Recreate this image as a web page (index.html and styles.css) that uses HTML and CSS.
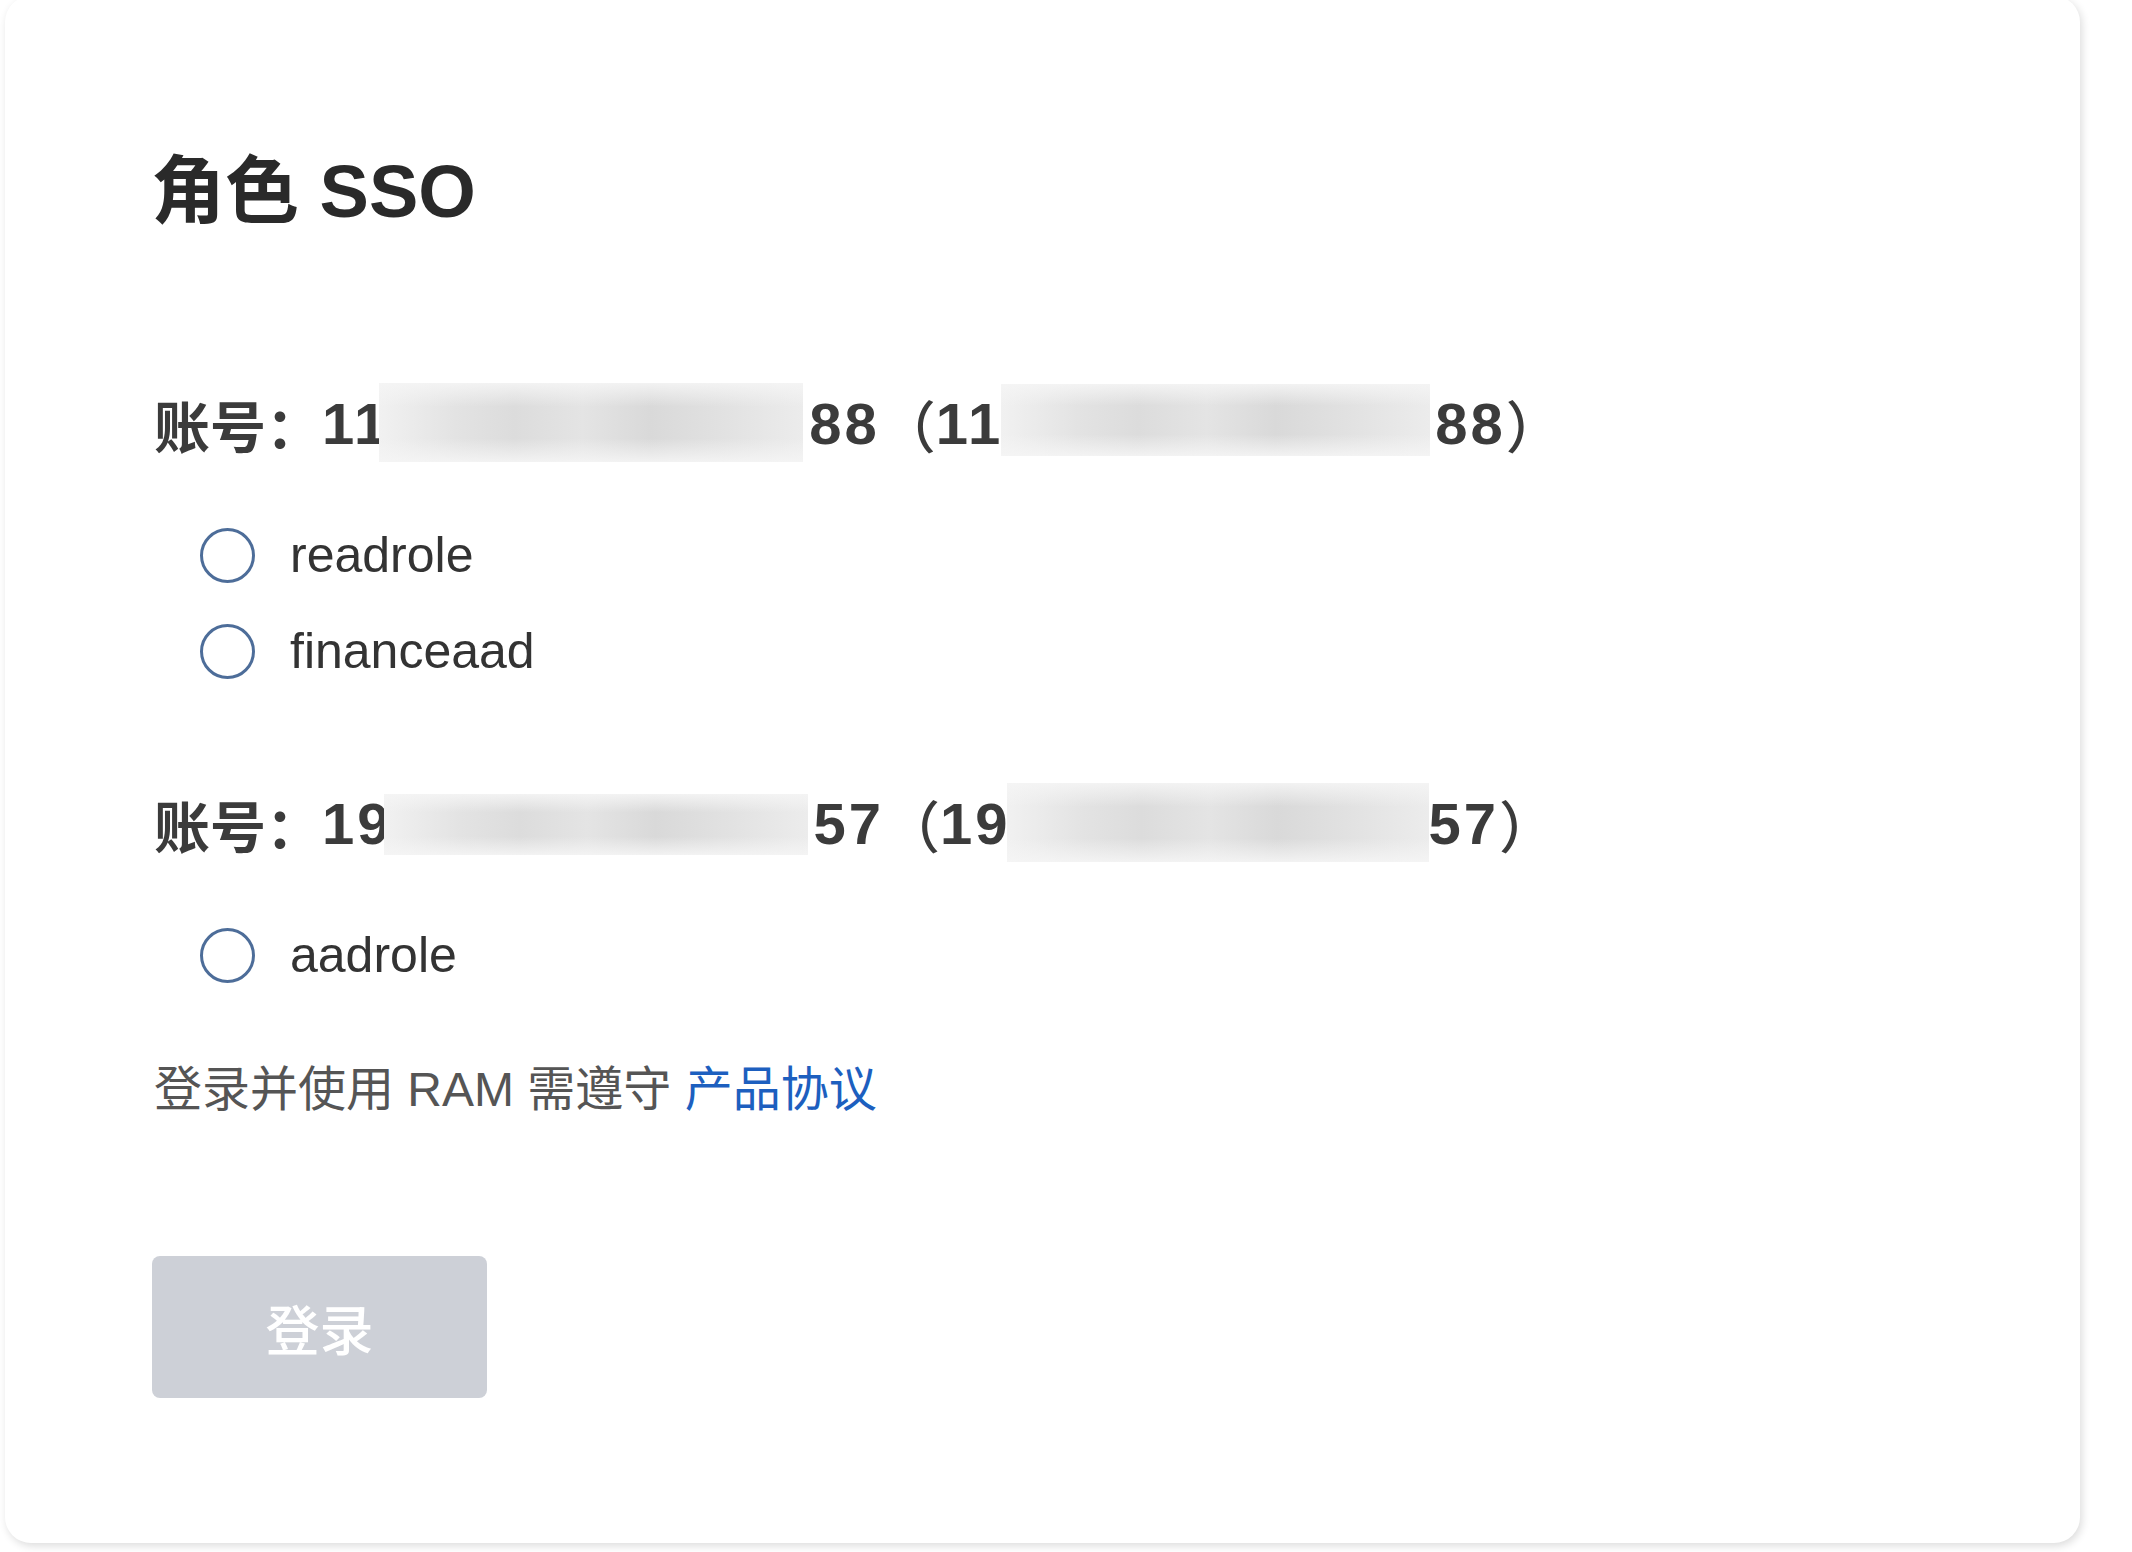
FILE: index.html
```html
<!DOCTYPE html>
<html lang="zh-CN">
<head>
<meta charset="utf-8">
<title>角色 SSO</title>
<link rel="stylesheet" href="styles.css">
</head>
<body>
<div class="card">
  <h1 class="title">角色 SSO</h1>

  <div class="account">
    <span class="acc-label">账号：</span><span class="num">11</span><span class="blur blur-1a"></span><span class="num tail">88</span><span class="paren">（</span><span class="num">11</span><span class="blur blur-1b"></span><span class="num tail-1">88</span><span class="paren close">）</span>
  </div>
  <div class="roles">
    <label class="role"><span class="radio"></span><span class="role-name">readrole</span></label>
    <label class="role"><span class="radio"></span><span class="role-name">financeaad</span></label>
  </div>

  <div class="account account-2">
    <span class="acc-label">账号：</span><span class="num">19</span><span class="blur blur-2a"></span><span class="num tail">57</span><span class="paren">（</span><span class="num">19</span><span class="blur blur-2b"></span><span class="num">57</span><span class="paren close">）</span>
  </div>
  <div class="roles">
    <label class="role"><span class="radio"></span><span class="role-name">aadrole</span></label>
  </div>

  <p class="terms">登录并使用 RAM 需遵守 <a class="terms-link" href="#">产品协议</a></p>

  <button class="login-btn" type="button" disabled>登录</button>
</div>
</body>
</html>
```

FILE: styles.css
```css
html, body {
  margin: 0;
  padding: 0;
  background: #ffffff;
}

body {
  font-family: "Liberation Sans", "Noto Sans CJK SC", sans-serif;
  color: #333333;
  overflow: hidden;
  height: 1552px;
}

.card {
  box-sizing: border-box;
  margin: -4px 0 0 5px;
  width: 2075px;
  height: 1547px;
  padding: 146px 0 0 149px;
  background: #ffffff;
  border-radius: 26px;
  box-shadow: 2px 3px 9px rgba(0, 0, 0, 0.14);
}

.title {
  margin: 0 0 0 -3px;
  height: 100px;
  display: flex;
  align-items: center;
  font-size: 74px;
  font-weight: 700;
  color: #2a2a2a;
  line-height: 1;
}

.account {
  margin-top: 132px;
  height: 100px;
  display: flex;
  align-items: center;
  font-size: 56px;
  font-weight: 700;
  color: #3b3b3b;
  line-height: 1;
  white-space: nowrap;
}

.account-2 {
  margin-top: 75px;
}

.acc-label {
  font-family: "Noto Sans CJK SC", sans-serif;
}

.paren {
  font-family: "Noto Sans CJK SC", sans-serif;
  font-weight: 500;
}

.num {
  font-size: 58px;
  letter-spacing: 3px;
}

.num.tail {
  margin-left: 6px;
}

.num.tail-1 {
  margin-left: 5px;
}

.blur {
  display: block;
  flex: none;
  background:
    linear-gradient(180deg, rgba(245,245,245,0.9) 0%, rgba(245,245,245,0) 30%, rgba(245,245,245,0) 70%, rgba(245,245,245,0.9) 100%),
    linear-gradient(90deg, #f1f1f1 0%, #e3e3e3 18%, #dcdcdc 32%, #e4e4e4 48%, #d9d9d9 64%, #e2e2e2 82%, #ececec 100%);
}

.blur-1a {
  width: 424px;
  height: 79px;
  margin-left: -10px;
  margin-top: -3px;
}

.blur-1b {
  width: 429px;
  height: 72px;
  margin-left: -2px;
  margin-top: -8px;
}

.blur-2a {
  width: 424px;
  height: 61px;
  margin-left: -9px;
}

.blur-2b {
  width: 422px;
  height: 79px;
  margin-left: -4px;
  margin-top: -4px;
}

.roles {
  margin-top: 33px;
  display: flex;
  flex-direction: column;
}

.role {
  height: 96px;
  display: flex;
  align-items: center;
  padding-left: 46px;
}

.radio {
  box-sizing: border-box;
  width: 55px;
  height: 55px;
  border: 3px solid #4d6d99;
  border-radius: 50%;
  flex: none;
}

.role-name {
  margin-left: 35px;
  font-size: 50px;
  color: #333333;
  line-height: 1;
}

.terms {
  margin: 57px 0 0 0;
  height: 60px;
  display: flex;
  align-items: center;
  font-size: 48px;
  color: #555555;
  line-height: 1;
  white-space: pre;
}

.terms-link {
  color: #1d5fbf;
  text-decoration: none;
}

.login-btn {
  display: flex;
  align-items: center;
  justify-content: center;
  margin-top: 136px;
  margin-left: -2px;
  width: 335px;
  height: 142px;
  padding: 0;
  border: none;
  border-radius: 8px;
  background: #cdd0d7;
  color: #ffffff;
  font-family: "Noto Sans CJK SC", sans-serif;
  font-size: 54px;
  font-weight: 500;
  cursor: default;
}
```
